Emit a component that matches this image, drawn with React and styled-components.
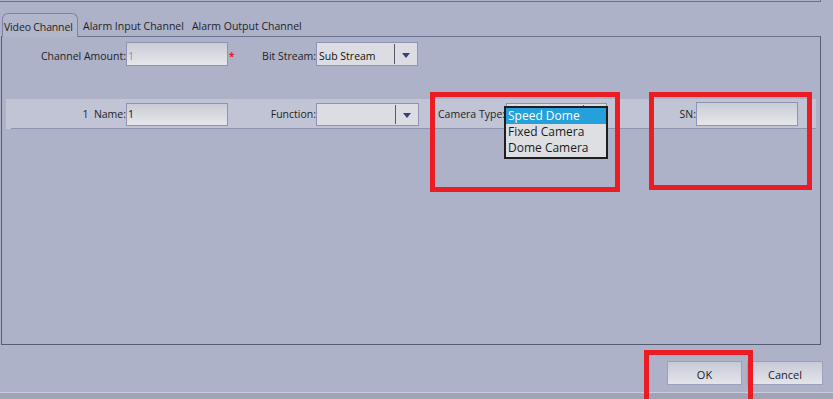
import React from "react";
import styled, { createGlobalStyle } from "styled-components";

const Global = createGlobalStyle`
  html, body { margin: 0; padding: 0; }
  body { font-family: "Open Sans", "Noto Sans", sans-serif; font-size: 10.5px; color: #1a1a1a; }
`;

const Screen = styled.div`
  position: relative;
  width: 833px;
  height: 399px;
  background: #adb2c9;
  overflow: hidden;
  display: flex;
  flex-direction: column;
`;

const TopEdge = styled.div`
  width: 820px;
  height: 1px;
  border-bottom: 1px solid #6a7090;
  border-right: 1px solid #6a7090;
`;

const Tabs = styled.div`
  display: flex;
  align-items: flex-end;
  margin-top: 11px;
  padding-left: 2px;
  height: 23px;
`;

const Tab = styled.div`
  height: 20px;
  display: flex;
  align-items: center;
  padding: 0 4px;
  box-sizing: border-box;
  white-space: nowrap;
  color: #1f1f24;
  ${p =>
    p.$active &&
    `
    padding: 2px 0 0 1px;
    width: 76px;
    border: 1px solid #7d84a3;
    border-bottom: none;
    border-radius: 6px 6px 0 0;
    background: #b1b6cb;
    position: relative;
    z-index: 1;
    margin-bottom: -1px;
    margin-right: 1px;
    height: 24px;
    letter-spacing: -0.15px;
  `}
`;

const Panel = styled.div`
  width: 820px;
  height: 309px;
  box-sizing: border-box;
  border: 1px solid #565c77;
  border-top-color: #6a7090;
  margin-left: 1px;
  display: flex;
  flex-direction: column;
`;

const Row = styled.div`
  display: flex;
  align-items: center;
  height: ${p => p.$h}px;
`;

const FirstRow = styled(Row)`
  margin-top: 5px;
`;

const Band = styled(Row)`
  margin: 33px 4px 0 4px;
  background: #c0c4d5;
  position: relative;
  &::after {
    content: "";
    position: absolute;
    left: 5px;
    right: 0;
    bottom: 0;
    height: 1px;
    background: #8e95b3;
  }
`;

const Label = styled.div`
  width: ${p => p.$w}px;
  text-align: ${p => (p.$left ? "left" : "right")};
  white-space: nowrap;
  padding-left: ${p => p.$pl || 0}px;
  padding-top: ${p => p.$pt || 0}px;
  box-sizing: border-box;
  color: #1f1f24;
`;

const Input = styled.div`
  width: ${p => p.$w || 102}px;
  height: ${p => p.$h || 24}px;
  box-sizing: border-box;
  border: 1px solid #8d93b4;
  background: linear-gradient(#c9ccd6, #e6e7eb);
  display: flex;
  align-items: center;
  padding-left: 1px;
  padding-top: ${p => p.$pt || 0}px;
  color: ${p => (p.$muted ? "#8a8d99" : "#111")};
`;

const Required = styled.span`
  color: #e0202a;
  width: 23px;
  padding-left: 1px;
  padding-top: 3px;
  box-sizing: border-box;
  font-size: 10px;
  font-weight: bold;
  line-height: 1;
`;

const Select = styled.div`
  position: relative;
  width: ${p => p.$w || 102}px;
  height: ${p => p.$h || 24}px;
  box-sizing: border-box;
  border: 1px solid #8d93b4;
  background: #dcdde2;
  display: flex;
  align-items: stretch;
  color: #111;
`;

const SelectText = styled.div`
  flex: 1;
  padding-left: 2px;
  padding-top: ${p => p.$pt || 0}px;
  margin: 1px 0;
  border-right: 1px solid #555a6a;
  display: flex;
  align-items: center;
`;

const Arrow = styled.div`
  width: 22px;
  display: flex;
  justify-content: center;
  align-items: center;
  &::before {
    content: "";
    display: ${p => (p.$hidden ? "none" : "block")};
    width: 0;
    height: 0;
    border-left: 4px solid transparent;
    border-right: 4px solid transparent;
    border-top: 5px solid #34407c;
    margin-top: 2px;
  }
`;

const Spacer = styled.div`
  width: ${p => p.$w}px;
  flex: none;
`;

const DropList = styled.div`
  position: absolute;
  left: -3px;
  top: 2px;
  width: 104px;
  box-sizing: border-box;
  border: 2px solid #1e1e22;
  background: #dedfe3;
  z-index: 5;
  padding-bottom: 1px;
`;

const DropItem = styled.div`
  height: 16px;
  line-height: 16px;
  padding-left: 2px;
  font-size: 12px;
  color: ${p => (p.$sel ? "#fff" : "#1a1a1a")};
  background: ${p => (p.$sel ? "#26a0da" : "transparent")};
`;

const Footer = styled.div`
  flex: 1;
  display: flex;
  justify-content: flex-end;
  align-items: flex-start;
  padding-top: 16px;
  padding-right: 10px;
  gap: 5px;
`;

const Button = styled.div`
  width: ${p => p.$w}px;
  height: 24px;
  box-sizing: border-box;
  border: 1px solid #9aa0bd;
  background: linear-gradient(#c7cad6, #e4e5ea);
  display: flex;
  justify-content: center;
  align-items: center;
  padding-top: 3px;
  font-size: 11px;
  color: #1a1a1a;
`;

const BottomStrip = styled.div`
  height: 6px;
  border-top: 1px solid #c9ccdc;
  background: #a0a4b6;
`;

const Marker = styled.div`
  position: absolute;
  left: ${p => p.$x}px;
  top: ${p => p.$y}px;
  width: ${p => p.$w}px;
  height: ${p => p.$h}px;
  border: 5px solid #ec1c24;
  box-sizing: border-box;
  z-index: 10;
  pointer-events: none;
`;

export default function App() {
  return (
    <>
      <Global />
      <Screen>
        <TopEdge />
        <Tabs>
          <Tab $active>Video Channel</Tab>
          <Tab>Alarm Input Channel</Tab>
          <Tab>Alarm Output Channel</Tab>
        </Tabs>
        <Panel>
          <FirstRow $h={24}>
            <Label $w={124} $pt={3}>Channel Amount:</Label>
            <Input $muted $pt={3}>1</Input>
            <Required>*</Required>
            <Label $w={65} $pt={3}>Bit Stream:</Label>
            <Select $w={102}>
              <SelectText $pt={3}>Sub Stream</SelectText>
              <Arrow />
            </Select>
          </FirstRow>
          <Band $h={30}>
            <Label $w={120}>1&nbsp;&nbsp;Name:</Label>
            <Input $h={23}>1</Input>
            <Label $w={88}>Function:</Label>
            <Select $w={103} $h={23}>
              <SelectText />
              <Arrow />
            </Select>
            <Spacer $w={19} />
            <Label $w={68} $left>Camera Type:</Label>
            <Select $w={101} $h={23}>
              <SelectText />
              <Arrow $hidden />
              <DropList>
                <DropItem $sel>Speed Dome</DropItem>
                <DropItem>Fixed Camera</DropItem>
                <DropItem>Dome Camera</DropItem>
              </DropList>
            </Select>
            <Label $w={89}>SN:</Label>
            <Input $h={24}></Input>
          </Band>
        </Panel>
        <Footer>
          <Button $w={75}>OK</Button>
          <Button $w={76}>Cancel</Button>
        </Footer>
        <BottomStrip />
        <Marker $x={430} $y={92} $w={190} $h={100} />
        <Marker $x={649} $y={92} $w={163} $h={98} />
        <Marker $x={644} $y={350} $w={109} $h={55} />
      </Screen>
    </>
  );
}
